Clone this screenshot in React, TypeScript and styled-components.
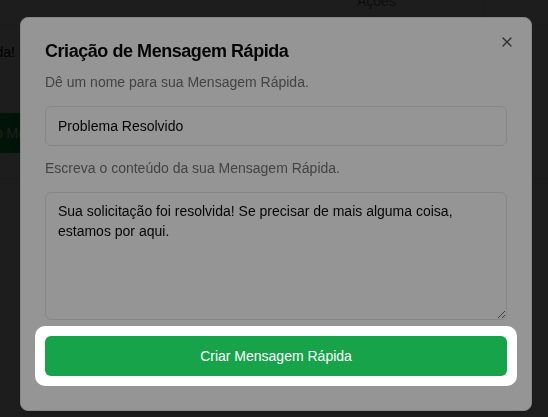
import React from "react";
import styled, { createGlobalStyle } from "styled-components";
import { X } from "lucide-react";

const GlobalStyle = createGlobalStyle`
  html, body { margin: 0; padding: 0; }
  body {
    font-family: "Liberation Sans", Arial, sans-serif;
    background: #ffffff;
    overflow: hidden;
  }
  * { box-sizing: border-box; }
`;

const Page = styled.div`
  display: flex;
  flex-direction: column;
  margin-top: -23px;
  height: 460px;
  background: #ffffff;
  color: #0a0a0a;
  font-size: 14px;
`;

const HeaderRow = styled.div`
  display: grid;
  grid-template-columns: 357px 127px 1fr;
  height: 49px;
  border-bottom: 1px solid #e5e5e5;
`;

const HeaderCell = styled.div<{ $divider?: boolean }>`
  display: flex;
  align-items: center;
  color: #737373;
  font-size: 14px;
  font-weight: 500;
  border-right: ${(p) => (p.$divider ? "1px solid #e5e5e5" : "none")};
`;

const BodyRow = styled.div`
  display: grid;
  grid-template-columns: 15px 1fr;
  align-content: start;
  column-gap: 4px;
  height: 153px;
  border-bottom: 1px solid #e5e5e5;
  padding-top: 16px;
`;

const TextEnd = styled.div`
  display: flex;
  flex-direction: column;
  align-items: flex-end;
  white-space: nowrap;
  line-height: 20px;
`;

const RowText = styled.div`
  line-height: 20px;
  white-space: nowrap;
`;

const ActionRow = styled.div`
  grid-column: 1 / 3;
  display: flex;
  margin-top: 51px;
  margin-left: -46px;
`;

const PageButton = styled.button`
  height: 40px;
  padding: 0 16px;
  border: none;
  border-radius: 6px;
  background: #16a34a;
  color: #ffffff;
  font-family: inherit;
  font-size: 14px;
`;

const Backdrop = styled.div`
  position: fixed;
  inset: 0;
  background: rgba(0, 0, 0, 0.8);
  z-index: 50;
`;

const Modal = styled.div`
  position: fixed;
  left: 20px;
  top: 17px;
  width: 512px;
  z-index: 50;
  display: flex;
  flex-direction: column;
  padding: 24px;
  background: #ffffff;
  border: 1px solid #e5e5e5;
  border-radius: 8px;
  box-shadow: 0 10px 15px -3px rgba(0, 0, 0, 0.1), 0 4px 6px -4px rgba(0, 0, 0, 0.1);
`;

const CloseButton = styled.button`
  position: absolute;
  top: 16px;
  right: 16px;
  width: 16px;
  height: 16px;
  padding: 0;
  border: none;
  background: transparent;
  color: #0a0a0a;
  opacity: 0.7;
  display: flex;
  align-items: center;
  justify-content: center;
`;

const Title = styled.h2`
  margin: 0;
  font-size: 18px;
  font-weight: 700;
  line-height: 1;
  letter-spacing: -0.025em;
  color: #0a0a0a;
`;

const Hint = styled.label`
  display: block;
  margin: 12px 0 14px;
  font-size: 14px;
  line-height: 20px;
  color: #737373;
`;

const TextInput = styled.input`
  width: 100%;
  height: 40px;
  padding: 0 12px;
  border: 1px solid #e5e5e5;
  border-radius: 6px;
  background: #ffffff;
  color: #0a0a0a;
  font-family: inherit;
  font-size: 14px;
  outline: none;
`;

const TextArea = styled.textarea`
  width: 100%;
  height: 128px;
  padding: 8px 12px;
  border: 1px solid #e5e5e5;
  border-radius: 6px;
  background: #ffffff;
  color: #0a0a0a;
  font-family: inherit;
  font-size: 14px;
  line-height: 20px;
  outline: none;
`;

const Spotlight = styled.div`
  position: relative;
  z-index: 1;
  margin: 6px -10px 0;
  padding: 10px;
  background: #ffffff;
  border-radius: 10px;
  box-shadow: 0 0 0 9999px rgba(0, 0, 0, 0.415);
`;

const SubmitButton = styled.button`
  display: flex;
  align-items: center;
  justify-content: center;
  width: 100%;
  height: 40px;
  border: none;
  border-radius: 6px;
  background: #16a34a;
  color: #ffffff;
  font-family: inherit;
  font-size: 14px;
`;

export default function App() {
  return (
    <>
      <GlobalStyle />
      <Page>
        <HeaderRow>
          <HeaderCell />
          <HeaderCell $divider>Ações</HeaderCell>
          <HeaderCell />
        </HeaderRow>
        <BodyRow>
          <TextEnd>
            <span>Sua solicitação foi resolvida!</span>
          </TextEnd>
          <RowText>Se precisar de mais alguma coisa, estamos por aqui.</RowText>
          <ActionRow>
            <PageButton>Novo Modelo</PageButton>
          </ActionRow>
        </BodyRow>
      </Page>
      <Backdrop />
      <Modal role="dialog">
        <Title>Criação de Mensagem Rápida</Title>
        <Hint htmlFor="nome">Dê um nome para sua Mensagem Rápida.</Hint>
        <TextInput id="nome" defaultValue="Problema Resolvido" />
        <Hint htmlFor="conteudo">Escreva o conteúdo da sua Mensagem Rápida.</Hint>
        <TextArea
          id="conteudo"
          defaultValue="Sua solicitação foi resolvida! Se precisar de mais alguma coisa, estamos por aqui."
        />
        <Spotlight>
          <SubmitButton>Criar Mensagem Rápida</SubmitButton>
        </Spotlight>
        <CloseButton aria-label="Fechar">
          <X size={16} strokeWidth={2} />
        </CloseButton>
      </Modal>
    </>
  );
}
